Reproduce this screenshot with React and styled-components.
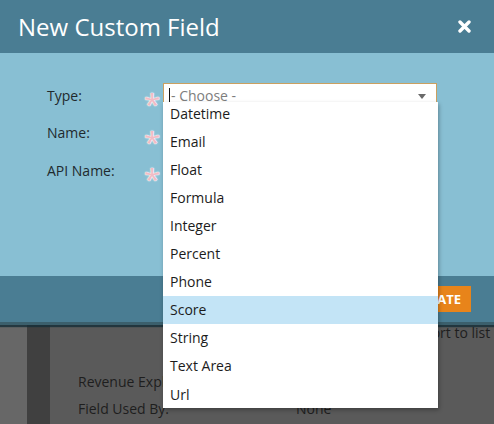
import React from "react";
import styled, { createGlobalStyle } from "styled-components";

const GlobalStyle = createGlobalStyle`
  html, body {
    margin: 0;
    padding: 0;
    background: #5a5a5a;
  }
  body {
    font-family: "Open Sans", "Liberation Sans", sans-serif;
    overflow: hidden;
  }
`;

const types = [
  "Datetime",
  "Email",
  "Float",
  "Formula",
  "Integer",
  "Percent",
  "Phone",
  "Score",
  "String",
  "Text Area",
  "Url",
];

const fields = ["Type:", "Name:", "API Name:"];

const App = () => {
  return (
    <Page>
      <GlobalStyle />
      <Modal>
        <Header>
          <Title>New Custom Field</Title>
          <Close aria-label="close">
            <svg width="13" height="13" viewBox="0 0 13 13">
              <path d="M2 2 L11 11 M11 2 L2 11" stroke="#fff" strokeWidth="3.4" strokeLinecap="round" />
            </svg>
          </Close>
        </Header>
        <Body>
          <Form>
            {fields.map((label, i) => (
              <React.Fragment key={label}>
                <Label>{label}</Label>
                <Required>*</Required>
                {i === 0 ? (
                  <SelectWrap>
                    <Select>
                      <Cursor />
                      <Placeholder>- Choose -</Placeholder>
                      <Caret />
                    </Select>
                    <Menu>
                      {types.map((t) => (
                        <Option key={t} active={t === "Score"}>
                          {t}
                        </Option>
                      ))}
                    </Menu>
                  </SelectWrap>
                ) : (
                  <Input />
                )}
              </React.Fragment>
            ))}
          </Form>
        </Body>
        <Footer>
          <CreateButton>CREATE</CreateButton>
        </Footer>
      </Modal>
      <Backdrop>
        <Gutter />
        <Sidebar />
        <Content>
          <ListLink>Export to list</ListLink>
          <InfoGrid>
            <InfoLabel>Revenue Explorer:</InfoLabel>
            <InfoValue>Yes</InfoValue>
            <InfoLabel>Field Used By:</InfoLabel>
            <InfoValue>None</InfoValue>
          </InfoGrid>
        </Content>
      </Backdrop>
    </Page>
  );
};

const Page = styled.div`
  width: 494px;
  height: 424px;
  overflow: hidden;
  display: flex;
  flex-direction: column;
`;

const Modal = styled.div`
  display: flex;
  flex-direction: column;
  position: relative;
  z-index: 2;
  box-shadow: 0 2px 1px rgba(20, 45, 55, 0.8);
`;

const Header = styled.div`
  height: 53px;
  background: #4a7d93;
  display: flex;
  align-items: center;
  justify-content: space-between;
  padding: 0 23px 0 18px;
`;

const Title = styled.h1`
  margin: 0;
  font-size: 24px;
  font-weight: 400;
  color: #fff;
`;

const Close = styled.button`
  background: none;
  border: none;
  padding: 0;
  display: flex;
  cursor: pointer;
`;

const Body = styled.div`
  height: 223px;
  background: #88bfd3;
  padding: 30px 0 0 47px;
  box-sizing: border-box;
`;

const Form = styled.div`
  display: grid;
  grid-template-columns: 100px 16px 274px;
  grid-auto-rows: 26px;
  row-gap: 11.5px;
  align-items: center;
`;

const Label = styled.span`
  font-size: 14px;
  color: #1f2a2e;
  margin-top: -2px;
`;

const Required = styled.span`
  font-size: 30px;
  line-height: 1;
  color: #f1bcc5;
  text-shadow: 0 0 1px #fff, 0 0 1px #fff, 0 0 2px #fff;
  align-self: end;
  margin-bottom: -10px;
  margin-left: -3px;
`;

const SelectWrap = styled.div`
  position: relative;
  height: 26px;
`;

const Select = styled.div`
  height: 26px;
  box-sizing: border-box;
  background: #fff;
  border: 1px solid #caa060;
  display: flex;
  align-items: center;
  padding: 0 10px 0 5px;
`;

const Cursor = styled.span`
  width: 1px;
  height: 17px;
  background: #111;
  margin-right: 1px;
`;

const Placeholder = styled.span`
  flex: 1;
  font-size: 14px;
  color: #7d7d7d;
  margin-top: -2px;
`;

const Caret = styled.span`
  width: 0;
  height: 0;
  border-left: 4px solid transparent;
  border-right: 4px solid transparent;
  border-top: 5px solid #6a6a6a;
`;

const Menu = styled.ul`
  position: absolute;
  top: 19px;
  left: 0;
  width: 275px;
  margin: 0;
  padding: 0;
  list-style: none;
  background: #fff;
  box-shadow: 1px 2px 4px rgba(0, 0, 0, 0.3);
  z-index: 5;
`;

const Option = styled.li`
  height: 28.1px;
  display: flex;
  align-items: center;
  padding-left: 7px;
  font-size: 14px;
  color: #1c1c1c;
  background: ${({ active }) => (active ? "#c3e4f6" : "#fff")};
  &:first-child {
    height: 22.2px;
    padding-bottom: 3px;
    box-sizing: content-box;
  }
`;

const Input = styled.div`
  height: 26px;
  box-sizing: border-box;
  background: #fff;
  border: 1px solid #9fb9c4;
`;

const Footer = styled.div`
  height: 46px;
  background: #4a7d93;
  border-bottom: 3px solid #3b5f6c;
  display: flex;
  align-items: center;
  justify-content: flex-end;
  padding-right: 23px;
`;

const CreateButton = styled.button`
  height: 26px;
  background: #e8841a;
  border: none;
  color: #fff;
  font-family: "Open Sans", "Liberation Sans", sans-serif;
  font-weight: 700;
  font-size: 13px;
  padding: 0 10px 0 12px;
`;

const Backdrop = styled.div`
  flex: 1;
  display: flex;
  background: #5a5a5a;
`;

const Gutter = styled.div`
  width: 27px;
  background: #676767;
`;

const Sidebar = styled.div`
  width: 23px;
  background: #404040;
`;

const Content = styled.div`
  flex: 1;
  display: flex;
  flex-direction: column;
  padding: 0 0 0 28px;
  overflow: hidden;
`;

const ListLink = styled.span`
  font-size: 14px;
  color: #1e1e1e;
  white-space: nowrap;
  align-self: flex-start;
  margin-left: 330px;
  margin-top: -2px;
`;

const InfoGrid = styled.div`
  display: grid;
  grid-template-columns: 218px auto;
  grid-auto-rows: 27px;
  align-items: center;
  margin-top: 26px;
`;

const InfoLabel = styled.span`
  font-size: 14px;
  color: #1e1e1e;
  white-space: nowrap;
`;

const InfoValue = styled.span`
  font-size: 14px;
  color: #1e1e1e;
`;

export default App;
